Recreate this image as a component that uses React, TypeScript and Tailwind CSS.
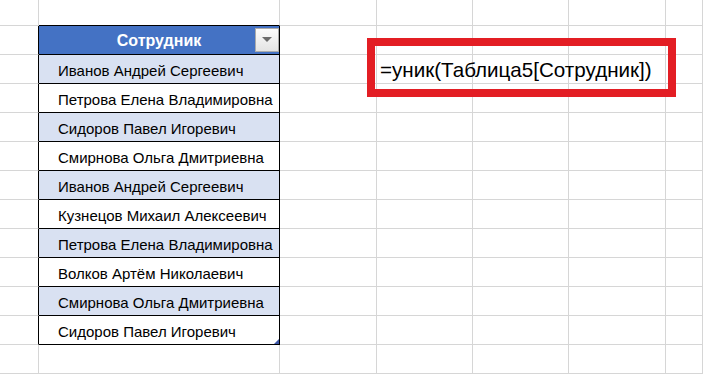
import React from "react";

const names = [
  "Иванов Андрей Сергеевич",
  "Петрова Елена Владимировна",
  "Сидоров Павел Игоревич",
  "Смирнова Ольга Дмитриевна",
  "Иванов Андрей Сергеевич",
  "Кузнецов Михаил Алексеевич",
  "Петрова Елена Владимировна",
  "Волков Артём Николаевич",
  "Смирнова Ольга Дмитриевна",
  "Сидоров Павел Игоревич",
];

const ROWS = 13;
const COLS = 7;

function FilterButton() {
  return (
    <div className="absolute right-0 top-[2px] flex h-[24px] w-[24px] items-center justify-center border border-[#ababab] bg-gradient-to-b from-[#fbfbfb] to-[#e4e4e4]">
      <svg width="10" height="6" viewBox="0 0 10 6">
        <path d="M0 0 L10 0 L5 5 Z" fill="#6b6b6b" />
      </svg>
    </div>
  );
}

function Cell({ r, c }: { r: number; c: number }) {
  const inTable = c === 1 && r >= 1 && r <= 11;
  const leftOfTable = c === 0 && r >= 1 && r <= 11;
  const aboveTable = c === 1 && r === 0;

  let cls = "relative border-r border-b border-[#d6d6d6]";
  if (leftOfTable) cls = "relative border-b border-r border-b-[#d6d6d6] border-r-black";
  if (aboveTable) cls = "relative border-r border-b border-r-[#d6d6d6] border-b-black";

  if (inTable) {
    if (r === 1) {
      return (
        <div className="relative border-r border-b border-black bg-[#4472c4]">
          <div className="pt-[7px] text-center text-[16px] leading-none font-bold text-white">
            Сотрудник
          </div>
          <FilterButton />
        </div>
      );
    }
    const idx = r - 2;
    const band = idx % 2 === 0 ? "bg-[#d9e1f2]" : "bg-white";
    return (
      <div className={`relative border-r border-b border-black ${band}`}>
        <div className="whitespace-nowrap pl-[19px] pt-[8px] text-[15px] leading-none text-black">
          {names[idx]}
        </div>
        {r === 11 && (
          <svg className="absolute bottom-0 right-0" width="5" height="5" viewBox="0 0 5 5">
            <path d="M5 0 L5 5 L0 5 Z" fill="#3d57a8" />
          </svg>
        )}
      </div>
    );
  }

  if (r === 2 && c === 3) {
    return (
      <div className={cls}>
        <div className="relative z-10 whitespace-nowrap pl-[3px] pt-[5px] text-[20.6px] leading-none text-black">
          =уник(Таблица5[Сотрудник])
        </div>
      </div>
    );
  }

  return <div className={cls} />;
}

export default function App() {
  const cells: React.ReactNode[] = [];
  for (let r = 0; r < ROWS; r++) {
    for (let c = 0; c < COLS; c++) {
      cells.push(<Cell key={`${r}-${c}`} r={r} c={c} />);
    }
  }
  return (
    <div className="relative h-[375px] w-[703px] overflow-hidden bg-white font-['Liberation_Sans',sans-serif]">
      <div className="grid grid-cols-[39px_241px_97px_96px_96px_97px_1fr] grid-rows-[26px_repeat(12,29px)]">
        {cells}
      </div>
      {/* highlight frame around the formula */}
      <div className="pointer-events-none absolute left-[367px] top-[38px] h-[59px] w-[309px] border-[8px] border-[#e31e24]" />
    </div>
  );
}
